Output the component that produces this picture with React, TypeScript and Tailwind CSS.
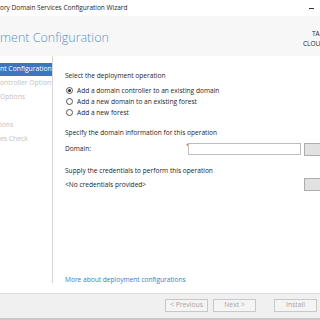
export default function App() {
  const navItems = [
    { label: "nt Configuration", active: true },
    { label: "ontroller Options" },
    { label: " Options" },
    { label: "" },
    { label: "ions" },
    { label: "es Check" },
  ]

  const radios = [
    { label: "Add a domain controller to an existing domain", checked: true },
    { label: "Add a new domain to an existing forest" },
    { label: "Add a new forest" },
  ]

  return (
    <div className="w-[320px] h-[320px] overflow-hidden flex flex-col bg-white text-[6.6px] text-[#1e1e1e] font-['Open_Sans','Noto_Sans',sans-serif]">
      {/* title bar */}
      <div className="h-[16px] shrink-0 flex items-center justify-between bg-white">
        <span className="text-[6.5px] leading-none whitespace-nowrap">ory Domain Services Configuration Wizard</span>
        <span className="w-[5px] h-[1px] bg-[#333] mr-[6px]" />
      </div>

      {/* header */}
      <div className="h-[40px] shrink-0 flex items-center justify-between bg-[#f7f7f7]">
        <span className="text-[12.5px] font-light leading-none text-[#5a93c2] whitespace-nowrap pt-[5px]">ment Configuration</span>
        <div className="w-[17px] shrink-0 flex flex-col text-[6.5px] leading-[10px] whitespace-nowrap pt-[6px] overflow-hidden">
          <span className="pl-[9px]">TA</span>
          <span>CLOU</span>
        </div>
      </div>

      {/* body */}
      <div className="flex-1 flex min-h-0 pb-[10px]">
        <div className="w-[53px] shrink-0 border-r border-[#d6d6d6] pt-[6px] overflow-hidden">
          {navItems.map((item, i) => (
            <div key={i} className="h-[14px] flex items-center">
              <div
                className={
                  item.active
                    ? "w-full h-[13px] flex items-center bg-[#3a76c2] text-white whitespace-nowrap"
                    : "w-full h-[13px] flex items-center text-[#c2c2c2] whitespace-nowrap"
                }
              >
                <span className="text-[6.8px]">{item.label}</span>
              </div>
            </div>
          ))}
        </div>

        <div className="flex-1 flex flex-col pl-[12px] pt-[14px] min-w-0">
          <div className="h-[11px] flex items-center whitespace-nowrap">Select the deployment operation</div>

          <div className="mt-[4px] flex flex-col">
            {radios.map((r, i) => (
              <div key={i} className="h-[11px] flex items-center whitespace-nowrap">
                <span className="ml-[1px] w-[7px] h-[7px] rounded-full border border-[#555] bg-white flex items-center justify-center">
                  {r.checked && <span className="w-[3px] h-[3px] rounded-full bg-[#222]" />}
                </span>
                <span className="ml-[4px]">{r.label}</span>
              </div>
            ))}
          </div>

          <div className="mt-[9px] h-[11px] flex items-center whitespace-nowrap">Specify the domain information for this operation</div>

          <div className="mt-[5px] h-[12px] flex items-center">
            <span className="w-[121px] shrink-0">Domain:</span>
            <span className="w-[2px] self-start text-[#e0453a] text-[7px] leading-none -mt-[1px]">*</span>
            <div className="w-[113px] h-[12px] shrink-0 border border-[#bdbdbd] bg-white" />
            <div className="ml-[3px] w-[60px] h-[13px] shrink-0 border border-[#adadad] bg-[#e1e1e1]" />
          </div>

          <div className="mt-[10px] h-[11px] flex items-center whitespace-nowrap">Supply the credentials to perform this operation</div>

          <div className="mt-[2px] h-[13px] flex items-center">
            <span className="w-[239px] shrink-0 whitespace-nowrap">&lt;No credentials provided&gt;</span>
            <div className="w-[60px] h-[13px] shrink-0 border border-[#adadad] bg-[#e1e1e1]" />
          </div>

          <div className="flex-1" />
          <div className="h-[11px] flex items-center text-[#3b7cc4] whitespace-nowrap -mb-[2px]">More about deployment configurations</div>
        </div>
      </div>

      {/* footer */}
      <div className="h-[25px] shrink-0 border-t border-[#dfdfdf] bg-[#f0f0f0] flex items-center justify-end pr-[3px] pb-[1px]">
        <button className="w-[43px] h-[13px] border border-[#c8c8c8] bg-[#f4f4f4] text-[#a5a5a5] text-[6.8px] leading-none">&lt; Previous</button>
        <button className="ml-[5px] w-[43px] h-[13px] border border-[#c8c8c8] bg-[#f4f4f4] text-[#a5a5a5] text-[6.8px] leading-none">Next &gt;</button>
        <button className="ml-[18px] w-[43px] h-[13px] border border-[#c8c8c8] bg-[#f4f4f4] text-[#a5a5a5] text-[6.8px] leading-none">Install</button>
      </div>
      <div className="h-[2px] shrink-0 bg-[#c9c9c9]" />
    </div>
  )
}
